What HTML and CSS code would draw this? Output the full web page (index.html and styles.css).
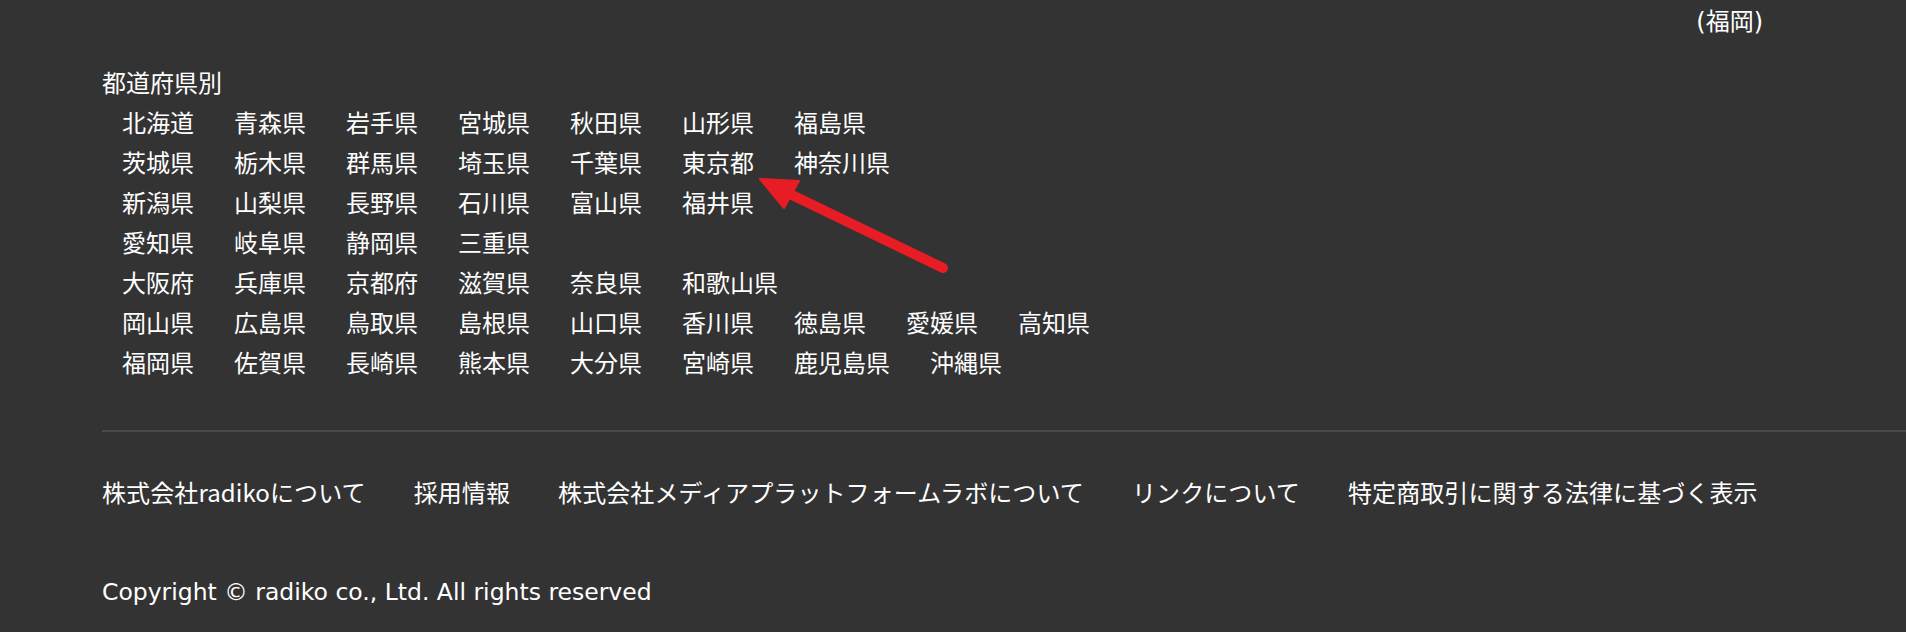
FILE: index.html
```html
<!DOCTYPE html>
<html lang="ja">
<head>
<meta charset="utf-8">
<title>radiko footer</title>
<link rel="stylesheet" href="styles.css">
</head>
<body>
<div class="page">
  <div class="area-note">(福岡)</div>

  <section class="prefs">
    <h2 class="prefs-title">都道府県別</h2>
    <ul class="pref-row">
      <li>北海道</li><li>青森県</li><li>岩手県</li><li>宮城県</li><li>秋田県</li><li>山形県</li><li>福島県</li>
    </ul>
    <ul class="pref-row">
      <li>茨城県</li><li>栃木県</li><li>群馬県</li><li>埼玉県</li><li>千葉県</li><li>東京都</li><li>神奈川県</li>
    </ul>
    <ul class="pref-row">
      <li>新潟県</li><li>山梨県</li><li>長野県</li><li>石川県</li><li>富山県</li><li>福井県</li>
    </ul>
    <ul class="pref-row">
      <li>愛知県</li><li>岐阜県</li><li>静岡県</li><li>三重県</li>
    </ul>
    <ul class="pref-row">
      <li>大阪府</li><li>兵庫県</li><li>京都府</li><li>滋賀県</li><li>奈良県</li><li>和歌山県</li>
    </ul>
    <ul class="pref-row">
      <li>岡山県</li><li>広島県</li><li>鳥取県</li><li>島根県</li><li>山口県</li><li>香川県</li><li>徳島県</li><li>愛媛県</li><li>高知県</li>
    </ul>
    <ul class="pref-row">
      <li>福岡県</li><li>佐賀県</li><li>長崎県</li><li>熊本県</li><li>大分県</li><li>宮崎県</li><li>鹿児島県</li><li>沖縄県</li>
    </ul>
  </section>

  <div class="divider"></div>

  <nav class="footer-links">
    <a>株式会社radikoについて</a>
    <a>採用情報</a>
    <a>株式会社メディアプラットフォームラボについて</a>
    <a>リンクについて</a>
    <a>特定商取引に関する法律に基づく表示</a>
  </nav>

  <p class="copyright">Copyright © radiko co., Ltd. All rights reserved</p>
</div>

<svg class="annotation" width="1906" height="632" viewBox="0 0 1906 632" aria-hidden="true">
  <line x1="943" y1="268" x2="790" y2="194" stroke="#e81c25" stroke-width="10" stroke-linecap="round"/>
  <polygon points="760,179 799,181 784,208" fill="#e81c25" stroke="#e81c25" stroke-width="2" stroke-linejoin="round"/>
</svg>
</body>
</html>
```

FILE: styles.css
```css
html, body {
  margin: 0;
  padding: 0;
  background: #333333;
}

body {
  color: #ffffff;
  font-family: "Noto Sans CJK JP", "Noto Sans", sans-serif;
  font-size: 24px;
  line-height: 40px;
  position: relative;
  width: 1906px;
  height: 632px;
  overflow: hidden;
}

.page {
  padding-left: 102px;
}

.area-note {
  text-align: right;
  padding-top: 2px;
  padding-right: 143px;
  height: 40px;
  font-family: "DejaVu Sans", "Noto Sans CJK JP", sans-serif;
}

.prefs {
  margin-top: 20px;
}

.prefs-title {
  margin: 0;
  font-size: 24px;
  font-weight: normal;
  line-height: 40px;
}

.pref-row {
  list-style: none;
  margin: 0;
  padding: 0;
  display: flex;
}

.pref-row li {
  margin: 0 20px;
  white-space: nowrap;
}

.divider {
  margin-top: 48px;
  height: 2px;
  background: #4a4a4a;
}

.footer-links {
  margin-top: 40px;
  display: flex;
  gap: 48px;
}

.footer-links a {
  color: #ffffff;
  text-decoration: none;
  white-space: nowrap;
  letter-spacing: 0.1px;
}

.copyright {
  margin: 60px 0 0;
  font-family: "DejaVu Sans", "Noto Sans CJK JP", sans-serif;
  font-size: 23.5px;
}

.annotation {
  position: absolute;
  left: 0;
  top: 0;
  pointer-events: none;
}
```
